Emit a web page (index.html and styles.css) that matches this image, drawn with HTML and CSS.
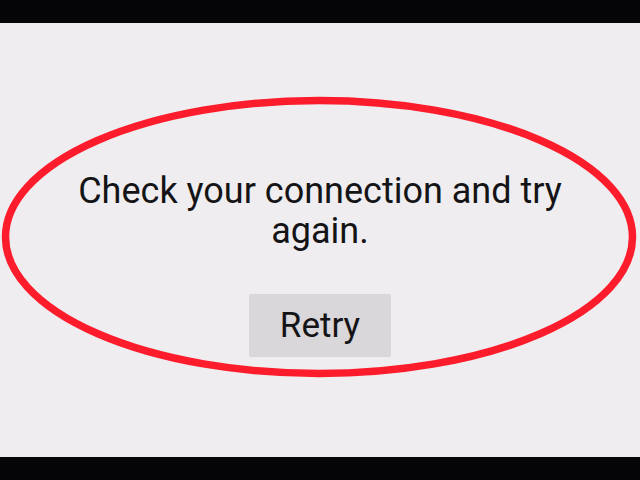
FILE: index.html
```html
<!DOCTYPE html>
<html>
<head>
<meta charset="utf-8">
<link rel="stylesheet" href="styles.css">
</head>
<body>
<div class="screen">
  <div class="bar"></div>
  <main class="content">
    <p class="message">Check your connection and try again.</p>
    <button class="retry">Retry</button>
    <svg class="ring" width="640" height="480" viewBox="0 0 640 480">
      <ellipse cx="319" cy="237" rx="313.5" ry="136.5" fill="none" stroke="#fd1c2c" stroke-width="7.5"/>
    </svg>
  </main>
  <div class="bar"></div>
</div>
</body>
</html>
```
FILE: styles.css
```css
html, body {
  margin: 0;
  padding: 0;
  background: #050407;
}
.screen {
  width: 640px;
  height: 480px;
  display: flex;
  flex-direction: column;
  position: relative;
  overflow: hidden;
}
.bar {
  height: 23px;
  background: #050407;
  flex: none;
}
.content {
  flex: 1;
  background: #efedef;
  display: flex;
  flex-direction: column;
  align-items: center;
  padding-top: 148px;
  box-sizing: border-box;
}
.message {
  margin: 0;
  width: 540px;
  text-align: center;
  font-family: Roboto, "Noto Sans", sans-serif;
  font-size: 36px;
  line-height: 40px;
  color: #141416;
}
.retry {
  margin-top: 43px;
  width: 142px;
  height: 63px;
  border: none;
  border-radius: 2px;
  background: #d9d7d9;
  font-family: Roboto, "Noto Sans", sans-serif;
  font-size: 35px;
  color: #141416;
  padding: 0 0 1px 0;
}
.ring {
  position: absolute;
  left: 0;
  top: 0;
  pointer-events: none;
}
```
